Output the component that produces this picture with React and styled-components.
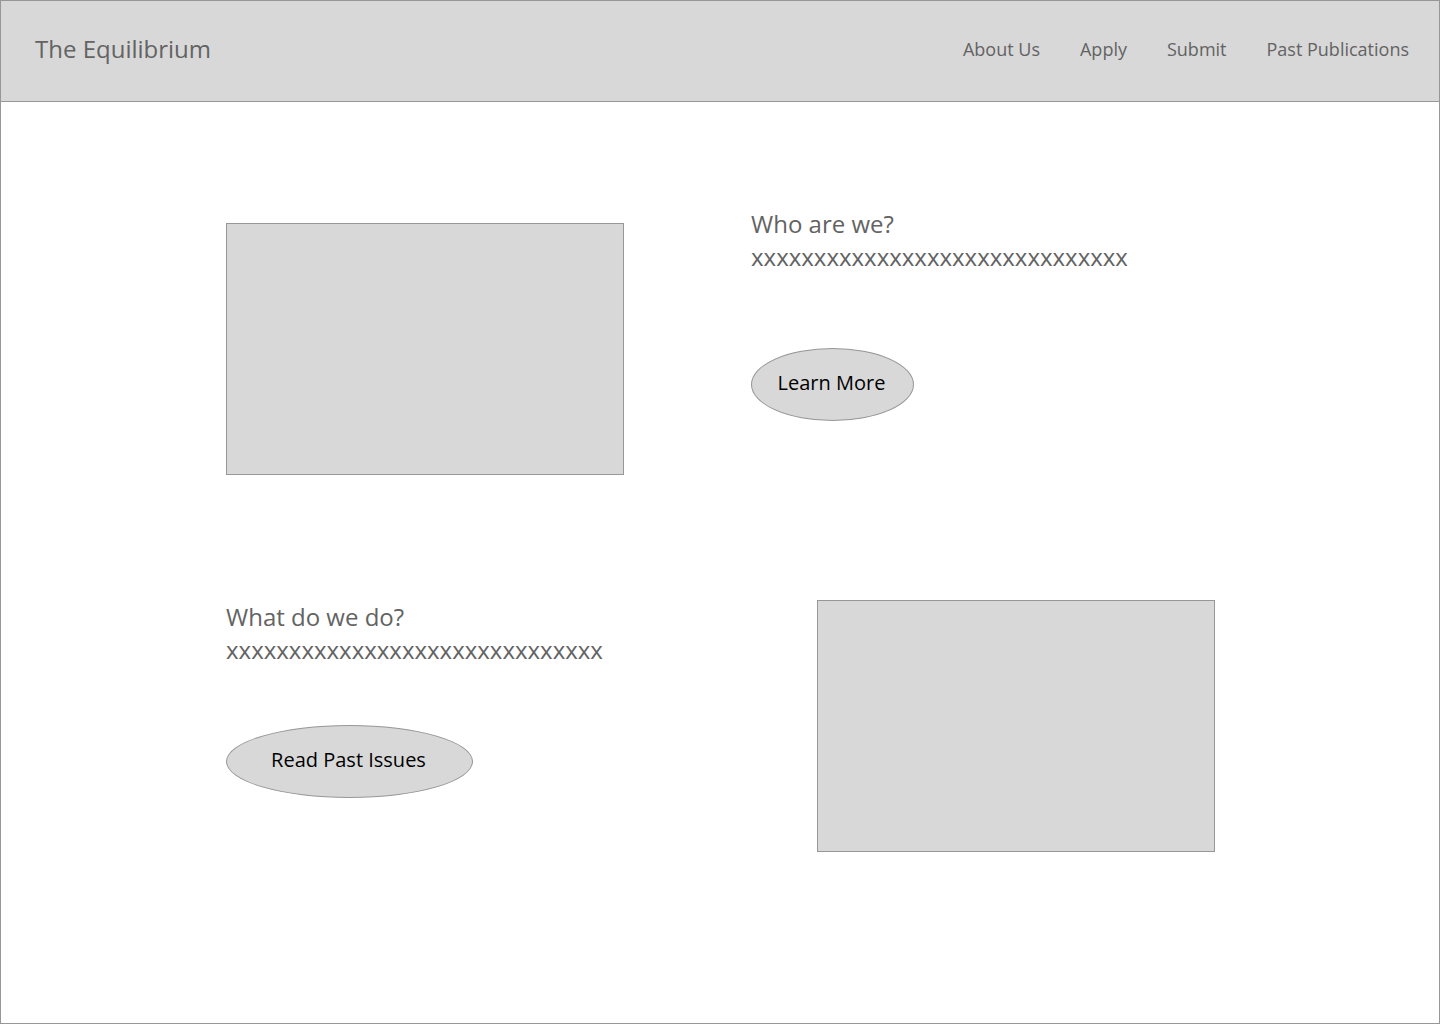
import React from "react";
import styled, { createGlobalStyle } from "styled-components";

const GlobalStyle = createGlobalStyle`
  *, *::before, *::after { box-sizing: border-box; }
  body {
    margin: 0;
    background: #fff;
    color: #636363;
    font-family: "Open Sans", "Noto Sans", sans-serif;
  }
`;

const Page = styled.div`
  min-height: 100vh;
  border: 1px solid #979797;
`;

const Header = styled.header`
  display: flex;
  align-items: center;
  justify-content: space-between;
  padding: 31px 30px 35px 34px;
  background: #d8d8d8;
  border-bottom: 1px solid #979797;
`;

const Brand = styled.a`
  color: inherit;
  font-size: 24px;
  line-height: 34px;
  text-decoration: none;
`;

const Nav = styled.nav`
  display: flex;
  gap: 40px;
`;

const NavLink = styled.a`
  color: inherit;
  font-size: 18px;
  line-height: 26px;
  text-decoration: none;
`;

const Main = styled.main`
  display: flex;
  flex-direction: column;
  gap: 125px;
  padding: 121px 224px 121px 225px;
`;

const Feature = styled.section`
  display: flex;
  align-items: flex-start;
  justify-content: ${(p) => (p.$spread ? "space-between" : "flex-start")};
  gap: 127px;
`;

const Picture = styled.div`
  flex: 0 1 398px;
  height: 252px;
  background: #d8d8d8;
  border: 1px solid #979797;
`;

const Copy = styled.div`
  display: flex;
  flex-direction: column;
  align-items: flex-start;
  gap: ${(p) => p.$gap}px;
  margin-top: ${(p) => p.$shift}px;
`;

const Title = styled.h2`
  margin: 0;
  font-size: 24px;
  font-weight: 400;
  line-height: 33px;
`;

const Text = styled.p`
  margin: 0;
  font-size: 24px;
  line-height: 33px;
`;

const Pill = styled.button`
  width: ${(p) => p.$width}px;
  height: 73px;
  padding: 0 2px 4px 0;
  background: #d8d8d8;
  border: 1px solid #979797;
  border-radius: 50%;
  color: #000;
  font-family: inherit;
  font-size: 20px;
  line-height: 28px;
  cursor: pointer;
`;

export default function App() {
  return (
    <>
      <GlobalStyle />
      <Page>
        <Header>
          <Brand href="#">The Equilibrium</Brand>
          <Nav>
            <NavLink href="#about">About Us</NavLink>
            <NavLink href="#apply">Apply</NavLink>
            <NavLink href="#submit">Submit</NavLink>
            <NavLink href="#publications">Past Publications</NavLink>
          </Nav>
        </Header>
        <Main>
          <Feature id="about">
            <Picture />
            <Copy $gap={75} $shift={-16}>
              <div>
                <Title>Who are we?</Title>
                <Text>xxxxxxxxxxxxxxxxxxxxxxxxxxxxxx</Text>
              </div>
              <Pill type="button" $width={163}>Learn More</Pill>
            </Copy>
          </Feature>
          <Feature id="publications" $spread>
            <Copy $gap={59} $shift={0}>
              <div>
                <Title>What do we do?</Title>
                <Text>xxxxxxxxxxxxxxxxxxxxxxxxxxxxxx</Text>
              </div>
              <Pill type="button" $width={247}>Read Past Issues</Pill>
            </Copy>
            <Picture />
          </Feature>
        </Main>
      </Page>
    </>
  );
}
